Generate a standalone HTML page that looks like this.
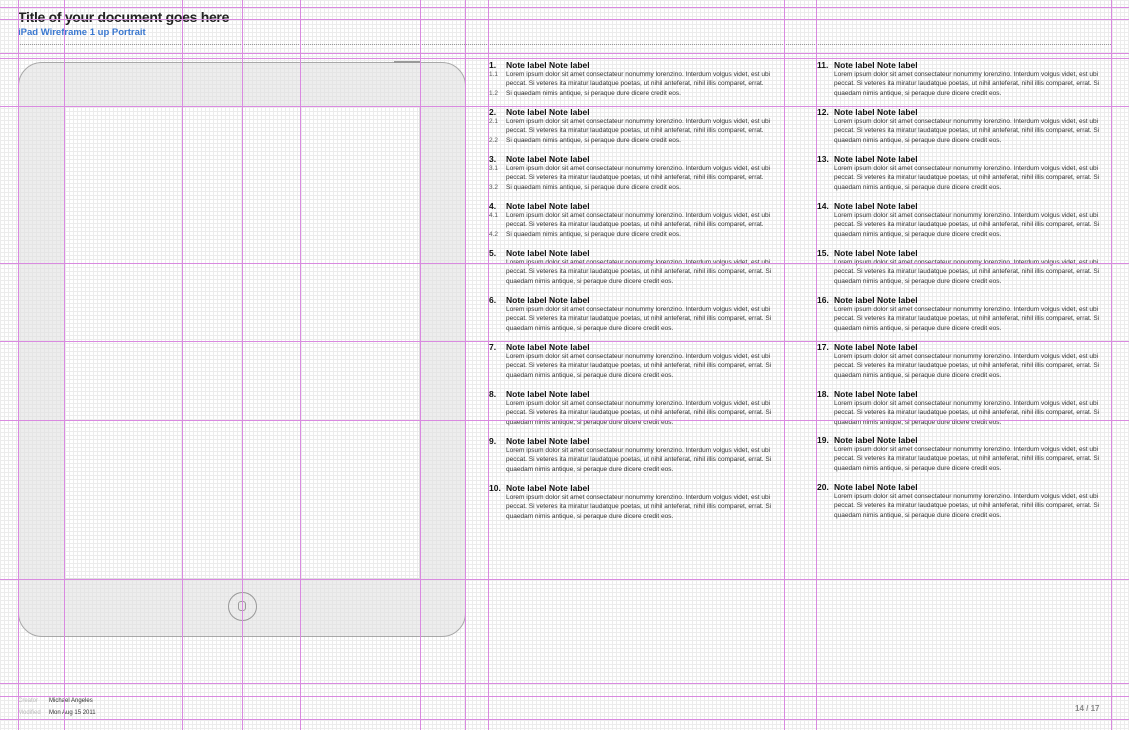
<!DOCTYPE html>
<html><head><meta charset="utf-8"><style>
*{margin:0;padding:0;box-sizing:border-box}
body{width:1129px;height:730px;position:relative;overflow:hidden;background:#fff;font-family:"Liberation Sans",Arial,sans-serif;color:#222}
.grid{position:absolute;inset:0;background-image:repeating-linear-gradient(to right,#ececec 0 1px,transparent 1px 4px),repeating-linear-gradient(to bottom,#ececec 0 1px,transparent 1px 4px);}
.v{position:absolute;top:0;height:730px;width:1px;background:#d98ae0;z-index:5}
.h{position:absolute;left:0;width:1129px;height:1px;background:#d98ae0;z-index:5}
.ipad{position:absolute;left:18px;top:62px;width:448px;height:575px;border:1.5px solid #a8a8a8;border-radius:24px;background:rgba(225,225,225,.6)}
.screen{position:absolute;left:64px;top:106px;width:356px;height:473px;background:#fff;border:1px solid #ddd;background-image:repeating-linear-gradient(to right,#ececec 0 1px,transparent 1px 4px),repeating-linear-gradient(to bottom,#ececec 0 1px,transparent 1px 4px)}
.btn{position:absolute;left:228px;top:592px;width:29px;height:29px;border:1.5px solid #999;border-radius:50%}
.btn i{position:absolute;left:9px;top:8px;width:8px;height:10px;border:1px solid #999;border-radius:3px}
.t{position:absolute;white-space:nowrap}
.n{position:absolute;font-size:8.5px;font-weight:bold;white-space:nowrap;color:#111}
.b{position:absolute;font-size:6.5px;line-height:9.3px;white-space:nowrap;color:#333}
.s{position:absolute;font-size:6.4px;line-height:9.3px;color:#555}
</style></head><body>
<div class="grid"></div>
<div class="t" style="left:18px;top:9px;font-size:14px;font-weight:bold;color:#222;letter-spacing:-.3px">Title of your document goes here</div>
<div class="t" style="left:18px;top:27px;font-size:9.5px;font-weight:bold;color:#3a78d0">iPad Wireframe 1 up Portrait</div>
<div style="position:absolute;left:18px;top:44px;width:1093px;border-top:1px dotted #999"></div>
<div class="ipad"></div>
<div style="position:absolute;left:394px;top:61px;width:26px;height:2px;background:#999"></div>
<div class="screen"></div>
<div class="btn"><i></i></div>

<div class="n" style="left:489px;top:60px">1.</div><div class="n" style="left:506px;top:60px">Note label Note label</div>
<div class="s" style="left:489px;top:70px">1.1<br><br>1.2</div>
<div class="b" style="left:506px;top:70px">Lorem ipsum dolor sit amet consectateur nonummy lorenzino. Interdum volgus videt, est ubi<br>peccat. Si veteres ita miratur laudatque poetas, ut nihil anteferat, nihil illis comparet, errat.<br>Si quaedam nimis antique, si peraque dure dicere credit eos.</div>
<div class="n" style="left:489px;top:107px">2.</div><div class="n" style="left:506px;top:107px">Note label Note label</div>
<div class="s" style="left:489px;top:117px">2.1<br><br>2.2</div>
<div class="b" style="left:506px;top:117px">Lorem ipsum dolor sit amet consectateur nonummy lorenzino. Interdum volgus videt, est ubi<br>peccat. Si veteres ita miratur laudatque poetas, ut nihil anteferat, nihil illis comparet, errat.<br>Si quaedam nimis antique, si peraque dure dicere credit eos.</div>
<div class="n" style="left:489px;top:154px">3.</div><div class="n" style="left:506px;top:154px">Note label Note label</div>
<div class="s" style="left:489px;top:164px">3.1<br><br>3.2</div>
<div class="b" style="left:506px;top:164px">Lorem ipsum dolor sit amet consectateur nonummy lorenzino. Interdum volgus videt, est ubi<br>peccat. Si veteres ita miratur laudatque poetas, ut nihil anteferat, nihil illis comparet, errat.<br>Si quaedam nimis antique, si peraque dure dicere credit eos.</div>
<div class="n" style="left:489px;top:201px">4.</div><div class="n" style="left:506px;top:201px">Note label Note label</div>
<div class="s" style="left:489px;top:211px">4.1<br><br>4.2</div>
<div class="b" style="left:506px;top:211px">Lorem ipsum dolor sit amet consectateur nonummy lorenzino. Interdum volgus videt, est ubi<br>peccat. Si veteres ita miratur laudatque poetas, ut nihil anteferat, nihil illis comparet, errat.<br>Si quaedam nimis antique, si peraque dure dicere credit eos.</div>

<div class="n" style="left:489px;top:248px">5.</div><div class="n" style="left:506px;top:248px">Note label Note label</div>
<div class="b" style="left:506px;top:258px">Lorem ipsum dolor sit amet consectateur nonummy lorenzino. Interdum volgus videt, est ubi<br>peccat. Si veteres ita miratur laudatque poetas, ut nihil anteferat, nihil illis comparet, errat. Si<br>quaedam nimis antique, si peraque dure dicere credit eos.</div>
<div class="n" style="left:489px;top:295px">6.</div><div class="n" style="left:506px;top:295px">Note label Note label</div>
<div class="b" style="left:506px;top:305px">Lorem ipsum dolor sit amet consectateur nonummy lorenzino. Interdum volgus videt, est ubi<br>peccat. Si veteres ita miratur laudatque poetas, ut nihil anteferat, nihil illis comparet, errat. Si<br>quaedam nimis antique, si peraque dure dicere credit eos.</div>
<div class="n" style="left:489px;top:342px">7.</div><div class="n" style="left:506px;top:342px">Note label Note label</div>
<div class="b" style="left:506px;top:352px">Lorem ipsum dolor sit amet consectateur nonummy lorenzino. Interdum volgus videt, est ubi<br>peccat. Si veteres ita miratur laudatque poetas, ut nihil anteferat, nihil illis comparet, errat. Si<br>quaedam nimis antique, si peraque dure dicere credit eos.</div>
<div class="n" style="left:489px;top:389px">8.</div><div class="n" style="left:506px;top:389px">Note label Note label</div>
<div class="b" style="left:506px;top:399px">Lorem ipsum dolor sit amet consectateur nonummy lorenzino. Interdum volgus videt, est ubi<br>peccat. Si veteres ita miratur laudatque poetas, ut nihil anteferat, nihil illis comparet, errat. Si<br>quaedam nimis antique, si peraque dure dicere credit eos.</div>
<div class="n" style="left:489px;top:436px">9.</div><div class="n" style="left:506px;top:436px">Note label Note label</div>
<div class="b" style="left:506px;top:446px">Lorem ipsum dolor sit amet consectateur nonummy lorenzino. Interdum volgus videt, est ubi<br>peccat. Si veteres ita miratur laudatque poetas, ut nihil anteferat, nihil illis comparet, errat. Si<br>quaedam nimis antique, si peraque dure dicere credit eos.</div>
<div class="n" style="left:489px;top:483px">10.</div><div class="n" style="left:506px;top:483px">Note label Note label</div>
<div class="b" style="left:506px;top:493px">Lorem ipsum dolor sit amet consectateur nonummy lorenzino. Interdum volgus videt, est ubi<br>peccat. Si veteres ita miratur laudatque poetas, ut nihil anteferat, nihil illis comparet, errat. Si<br>quaedam nimis antique, si peraque dure dicere credit eos.</div>

<div class="n" style="left:817px;top:60px">11.</div><div class="n" style="left:834px;top:60px">Note label Note label</div>
<div class="b" style="left:834px;top:70px">Lorem ipsum dolor sit amet consectateur nonummy lorenzino. Interdum volgus videt, est ubi<br>peccat. Si veteres ita miratur laudatque poetas, ut nihil anteferat, nihil illis comparet, errat. Si<br>quaedam nimis antique, si peraque dure dicere credit eos.</div>
<div class="n" style="left:817px;top:107px">12.</div><div class="n" style="left:834px;top:107px">Note label Note label</div>
<div class="b" style="left:834px;top:117px">Lorem ipsum dolor sit amet consectateur nonummy lorenzino. Interdum volgus videt, est ubi<br>peccat. Si veteres ita miratur laudatque poetas, ut nihil anteferat, nihil illis comparet, errat. Si<br>quaedam nimis antique, si peraque dure dicere credit eos.</div>
<div class="n" style="left:817px;top:154px">13.</div><div class="n" style="left:834px;top:154px">Note label Note label</div>
<div class="b" style="left:834px;top:164px">Lorem ipsum dolor sit amet consectateur nonummy lorenzino. Interdum volgus videt, est ubi<br>peccat. Si veteres ita miratur laudatque poetas, ut nihil anteferat, nihil illis comparet, errat. Si<br>quaedam nimis antique, si peraque dure dicere credit eos.</div>
<div class="n" style="left:817px;top:201px">14.</div><div class="n" style="left:834px;top:201px">Note label Note label</div>
<div class="b" style="left:834px;top:211px">Lorem ipsum dolor sit amet consectateur nonummy lorenzino. Interdum volgus videt, est ubi<br>peccat. Si veteres ita miratur laudatque poetas, ut nihil anteferat, nihil illis comparet, errat. Si<br>quaedam nimis antique, si peraque dure dicere credit eos.</div>
<div class="n" style="left:817px;top:248px">15.</div><div class="n" style="left:834px;top:248px">Note label Note label</div>
<div class="b" style="left:834px;top:258px">Lorem ipsum dolor sit amet consectateur nonummy lorenzino. Interdum volgus videt, est ubi<br>peccat. Si veteres ita miratur laudatque poetas, ut nihil anteferat, nihil illis comparet, errat. Si<br>quaedam nimis antique, si peraque dure dicere credit eos.</div>
<div class="n" style="left:817px;top:295px">16.</div><div class="n" style="left:834px;top:295px">Note label Note label</div>
<div class="b" style="left:834px;top:305px">Lorem ipsum dolor sit amet consectateur nonummy lorenzino. Interdum volgus videt, est ubi<br>peccat. Si veteres ita miratur laudatque poetas, ut nihil anteferat, nihil illis comparet, errat. Si<br>quaedam nimis antique, si peraque dure dicere credit eos.</div>
<div class="n" style="left:817px;top:342px">17.</div><div class="n" style="left:834px;top:342px">Note label Note label</div>
<div class="b" style="left:834px;top:352px">Lorem ipsum dolor sit amet consectateur nonummy lorenzino. Interdum volgus videt, est ubi<br>peccat. Si veteres ita miratur laudatque poetas, ut nihil anteferat, nihil illis comparet, errat. Si<br>quaedam nimis antique, si peraque dure dicere credit eos.</div>
<div class="n" style="left:817px;top:389px">18.</div><div class="n" style="left:834px;top:389px">Note label Note label</div>
<div class="b" style="left:834px;top:399px">Lorem ipsum dolor sit amet consectateur nonummy lorenzino. Interdum volgus videt, est ubi<br>peccat. Si veteres ita miratur laudatque poetas, ut nihil anteferat, nihil illis comparet, errat. Si<br>quaedam nimis antique, si peraque dure dicere credit eos.</div>
<div class="n" style="left:817px;top:435px">19.</div><div class="n" style="left:834px;top:435px">Note label Note label</div>
<div class="b" style="left:834px;top:445px">Lorem ipsum dolor sit amet consectateur nonummy lorenzino. Interdum volgus videt, est ubi<br>peccat. Si veteres ita miratur laudatque poetas, ut nihil anteferat, nihil illis comparet, errat. Si<br>quaedam nimis antique, si peraque dure dicere credit eos.</div>
<div class="n" style="left:817px;top:482px">20.</div><div class="n" style="left:834px;top:482px">Note label Note label</div>
<div class="b" style="left:834px;top:492px">Lorem ipsum dolor sit amet consectateur nonummy lorenzino. Interdum volgus videt, est ubi<br>peccat. Si veteres ita miratur laudatque poetas, ut nihil anteferat, nihil illis comparet, errat. Si<br>quaedam nimis antique, si peraque dure dicere credit eos.</div>

<div class="t" style="left:18px;top:698px;font-size:6px;color:#bbb">Creator</div>
<div class="t" style="left:49px;top:698px;font-size:6px;color:#333">Michael Angeles</div>
<div class="t" style="left:18px;top:710px;font-size:6px;color:#bbb">Modified</div>
<div class="t" style="left:49px;top:710px;font-size:6px;color:#333">Mon Aug 15 2011</div>
<div class="t" style="left:1075px;top:704px;font-size:8px;font-weight:bold;color:#888">14 / 17</div>

<div class="v" style="left:18px"></div><div class="v" style="left:64px"></div><div class="v" style="left:182px"></div>
<div class="v" style="left:242px"></div><div class="v" style="left:300px"></div><div class="v" style="left:420px"></div>
<div class="v" style="left:465px"></div><div class="v" style="left:488px"></div><div class="v" style="left:784px"></div>
<div class="v" style="left:816px"></div><div class="v" style="left:1111px"></div>
<div class="h" style="top:7px"></div><div class="h" style="top:19px"></div><div class="h" style="top:53px"></div>
<div class="h" style="top:58px"></div><div class="h" style="top:106px"></div><div class="h" style="top:263px"></div>
<div class="h" style="top:341px"></div><div class="h" style="top:420px"></div><div class="h" style="top:579px"></div>
<div class="h" style="top:683px"></div><div class="h" style="top:696px"></div><div class="h" style="top:719px"></div>
</body></html>
